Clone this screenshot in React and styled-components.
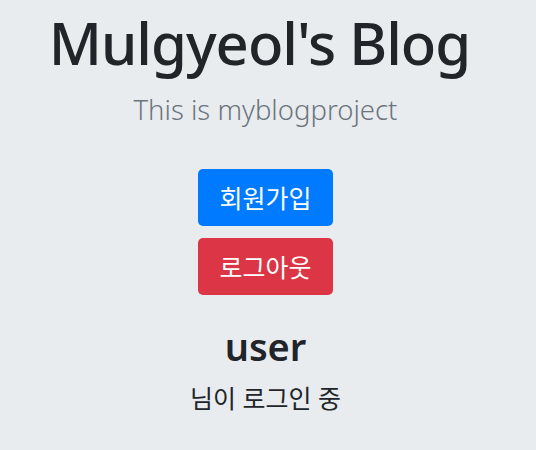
import React from 'react';
import styled, { createGlobalStyle } from 'styled-components';

const GlobalStyle = createGlobalStyle`
  html, body {
    margin: 0;
    padding: 0;
    background: #e9ecef;
  }
  body {
    font-family: "Noto Sans", "Noto Sans CJK KR", sans-serif;
    color: #212529;
  }
`;

const Jumbotron = styled.div`
  display: flex;
  flex-direction: column;
  align-items: center;
  text-align: center;
  padding: 8px 5px 0 0;
  min-height: 450px;
  box-sizing: border-box;
`;

const Title = styled.h1`
  margin: 0;
  padding-right: 12px;
  font-size: 58px;
  font-weight: 500;
  line-height: 1.2;
  letter-spacing: -1px;
`;

const Lead = styled.p`
  margin: 15px 0 0;
  font-size: 27.5px;
  font-weight: 300;
  color: #6c757d;
  line-height: 1.2;
`;

const ButtonStack = styled.div`
  display: flex;
  flex-direction: column;
  align-items: center;
  gap: 12px;
  margin-top: 43px;
`;

const Button = styled.button`
  width: 135px;
  height: 57px;
  padding: 0;
  border: none;
  border-radius: 5px;
  background: ${(p) => (p.$variant === 'danger' ? '#dc3545' : '#007bff')};
  color: #fff;
  font-family: "Noto Sans", "Noto Sans CJK KR", sans-serif;
  font-size: 25px;
  cursor: pointer;
`;

const UserName = styled.h2`
  margin: 29px 0 0;
  font-size: 38px;
  font-weight: 600;
  line-height: 1.2;
`;

const Status = styled.p`
  margin: 13px 0 0;
  font-size: 25px;
  line-height: 1.3;
`;

export default function App() {
  return (
    <>
      <GlobalStyle />
      <Jumbotron>
        <Title>Mulgyeol's Blog</Title>
        <Lead>This is myblogproject</Lead>
        <ButtonStack>
          <Button>회원가입</Button>
          <Button $variant="danger">로그아웃</Button>
        </ButtonStack>
        <UserName>user</UserName>
        <Status>님이 로그인 중</Status>
      </Jumbotron>
    </>
  );
}
